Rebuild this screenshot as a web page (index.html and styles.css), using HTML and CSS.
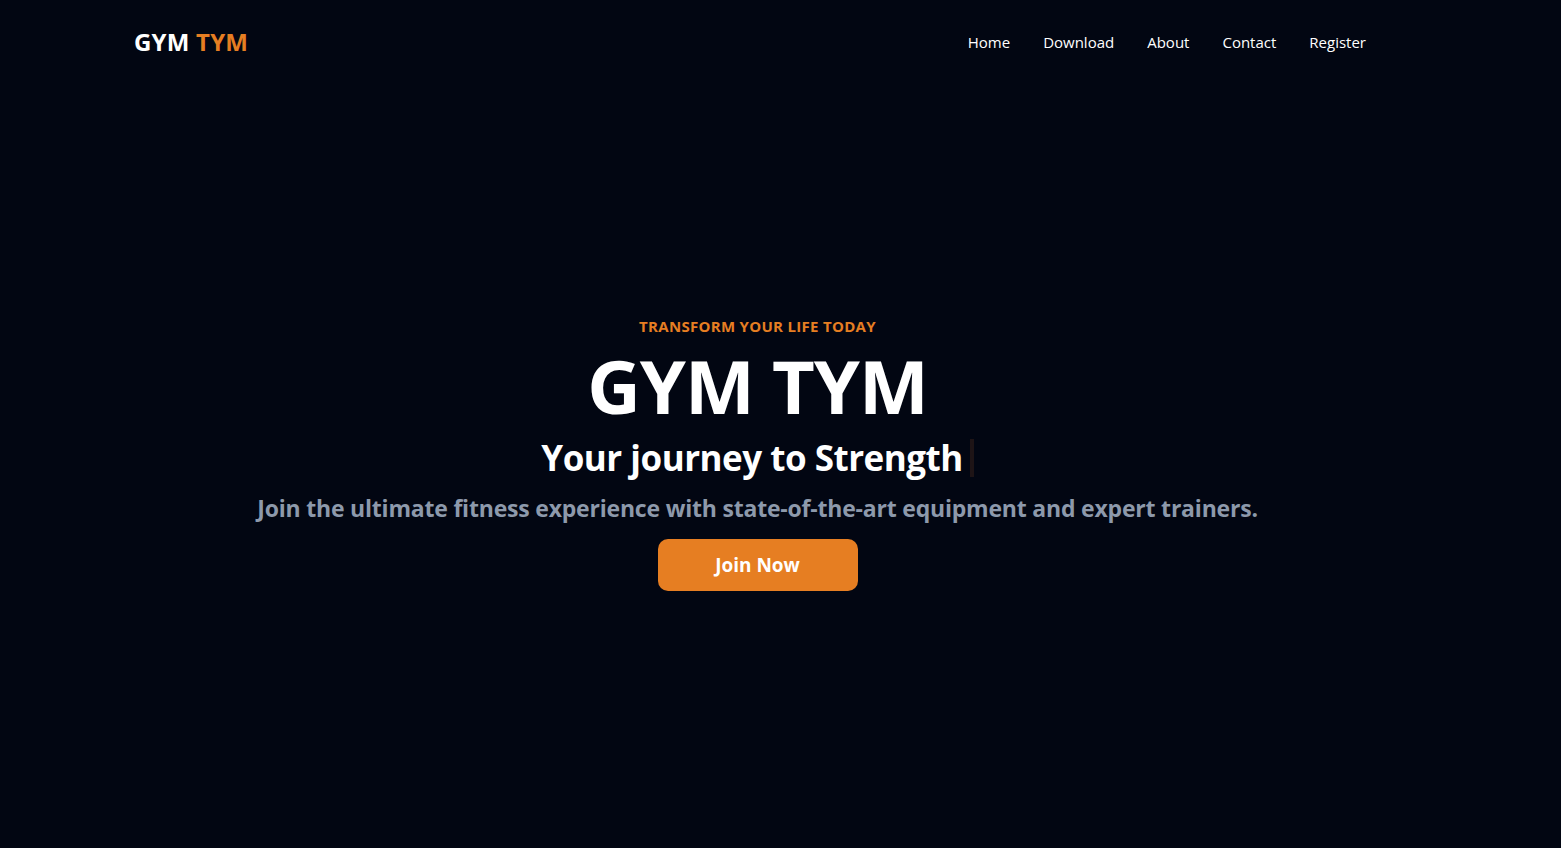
FILE: index.html
```html
<!DOCTYPE html>
<html lang="en">
<head>
<meta charset="utf-8">
<title>GYM TYM</title>
<link rel="stylesheet" href="styles.css">
</head>
<body>
<header class="navbar">
  <a class="logo" href="#">GYM <span class="accent">TYM</span></a>
  <nav class="nav-links">
    <a href="#">Home</a>
    <a href="#">Download</a>
    <a href="#">About</a>
    <a href="#">Contact</a>
    <a href="#">Register</a>
  </nav>
</header>
<main class="hero">
  <p class="eyebrow">TRANSFORM YOUR LIFE TODAY</p>
  <h1 class="title">GYM TYM</h1>
  <h2 class="subtitle">Your journey to Strength<span class="cursor"></span></h2>
  <p class="lead">Join the ultimate fitness experience with state-of-the-art equipment and expert trainers.</p>
  <a class="btn" href="#">Join Now</a>
</main>
</body>
</html>
```
FILE: styles.css
```css
* { box-sizing: border-box; }
html, body { margin: 0; padding: 0; }
body {
  background: #020612;
  color: #ffffff;
  font-family: "Open Sans", "Noto Sans", sans-serif;
  min-height: 848px;
}
a { text-decoration: none; color: inherit; }

.navbar {
  display: flex;
  align-items: center;
  justify-content: space-between;
  height: 83px;
  padding: 0 195px 0 134px;
}
.logo {
  font-size: 24px;
  font-weight: 700;
  color: #ffffff;
  letter-spacing: 0.2px;
}
.accent { color: #e67e22; }
.nav-links {
  display: flex;
  gap: 33px;
}
.nav-links a {
  font-size: 15px;
  color: #ffffff;
}

.hero {
  display: flex;
  flex-direction: column;
  align-items: center;
  padding: 233px 46px 0 0;
  text-align: center;
}
.eyebrow {
  margin: 0;
  color: #e67e22;
  font-size: 15px;
  font-weight: 700;
  line-height: 20px;
  letter-spacing: 0.3px;
}
.title {
  margin: 8px 0 0;
  font-size: 74px;
  font-weight: 700;
  line-height: 84px;
  letter-spacing: -1px;
}
.subtitle {
  margin: 6px 0 0;
  font-size: 35px;
  font-weight: 700;
  line-height: 48px;
  display: flex;
  align-items: center;
  letter-spacing: -0.5px;
}
.cursor {
  display: inline-block;
  width: 4px;
  height: 38px;
  margin-left: 7px;
  background: #1e1416;
}
.lead {
  margin: 10px 0 0;
  color: #8d99ab;
  font-size: 23px;
  font-weight: 700;
  line-height: 32px;
  letter-spacing: -0.2px;
}
.btn {
  margin-top: 15px;
  width: 200px;
  height: 52px;
  display: flex;
  align-items: center;
  justify-content: center;
  background: #e67e22;
  border-radius: 10px;
  color: #ffffff;
  font-size: 19px;
  font-weight: 700;
}
```
